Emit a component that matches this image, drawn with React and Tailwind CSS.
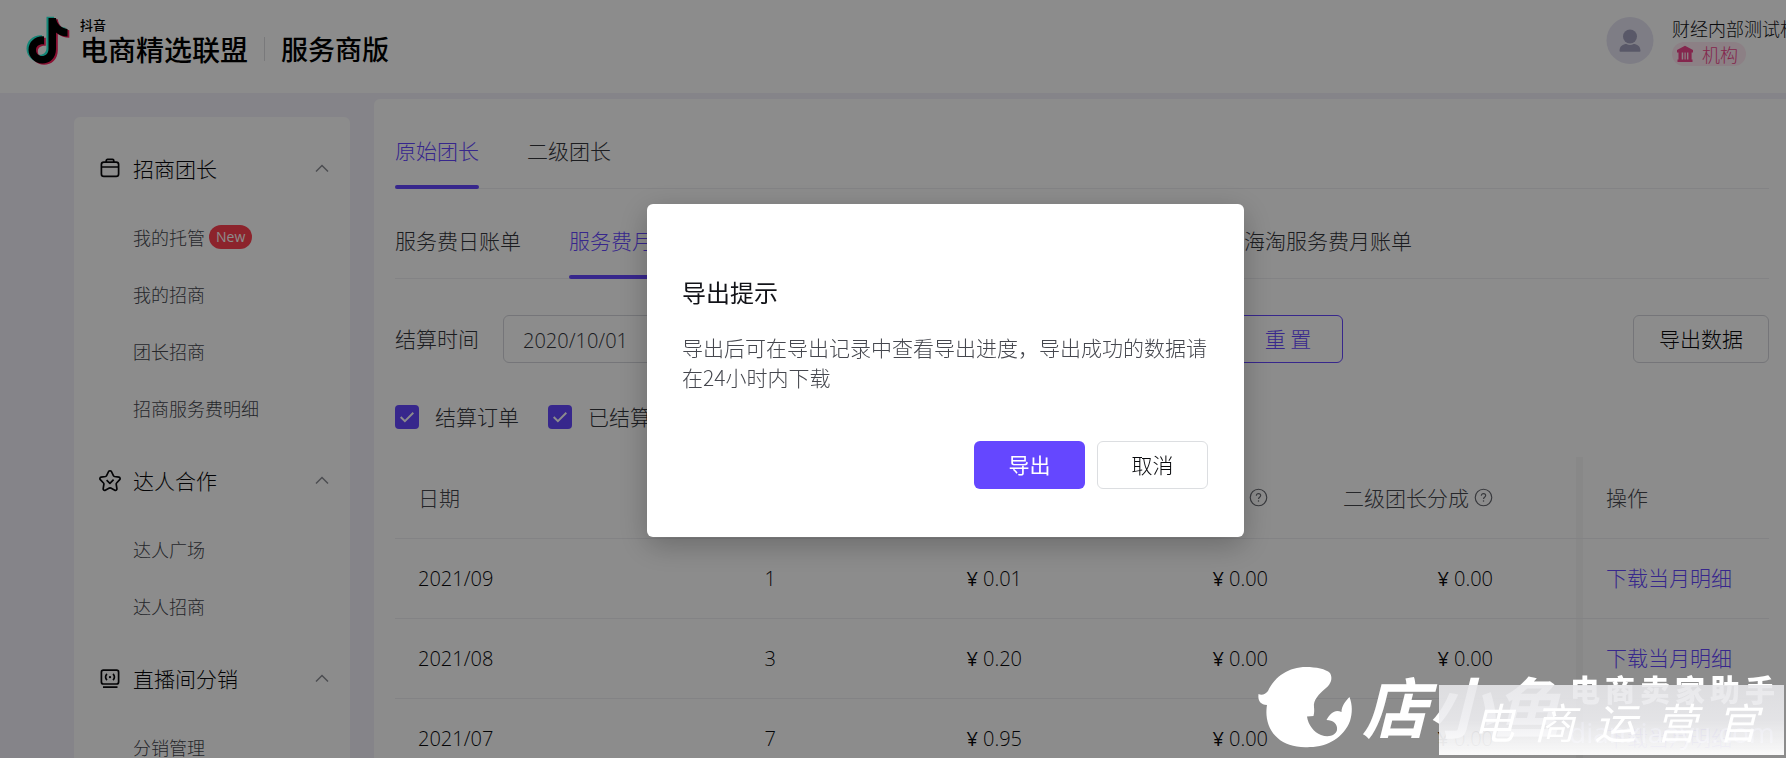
import React from 'react';

const CHECK = 'M3.5 9.5l4 4 8-8';

function ChevronUp() {
  return (
    <svg className="h-4 w-4 text-[#8b8d94]" viewBox="0 0 16 16" fill="none" stroke="currentColor" strokeWidth="1.5" aria-hidden="true">
      <path d="M2 10.5L8 4.5l6 6" />
    </svg>
  );
}

function BagIcon() {
  return (
    <svg className="h-6 w-6" viewBox="0 0 24 24" fill="none" stroke="currentColor" strokeWidth="1.7" aria-hidden="true">
      <rect x="3.4" y="5.2" width="17.2" height="14.2" rx="2.4" />
      <path d="M8.2 5.2V3.700c0-.8.6-1.300 1.300-1.300h5c.7 0 1.300.5 1.300 1.300v1.500M3.400 10h17.200" />
    </svg>
  );
}

function StarIcon() {
  return (
    <svg className="h-6 w-6" viewBox="0 0 24 24" fill="none" stroke="currentColor" strokeWidth="1.7" strokeLinejoin="round" aria-hidden="true">
      <path d="M10.6 2.500c.600-1 2.200-1 2.800 0l2 4.200c.200.400.600.700 1.100.800l4.400.700c1.200.200 1.700 1.600.800 2.500l-3.100 3.300c-.300.300-.500.800-.400 1.200l.700 4.500c.200 1.200-1 2.100-2.100 1.500l-4-2.100c-.500-.200-1-.200-1.500 0l-4 2.100c-1.100.600-2.300-.300-2.100-1.500l.700-4.500c.1-.4-.1-.9-.4-1.200L2.300 10.700c-.9-.9-.4-2.300.8-2.500l4.400-.7c.5-.1.900-.4 1.100-.8z" />
      <path d="M8.600 11.200l3.300 3.100 3.700-3.700" />
    </svg>
  );
}

function LiveIcon() {
  return (
    <svg className="h-6 w-6" viewBox="0 0 24 24" fill="none" stroke="currentColor" strokeWidth="1.7" aria-hidden="true">
      <rect x="3.400" y="3.200" width="17.200" height="13.800" rx="2" />
      <path d="M5 20.200h14.500M9 7c-1.900 1.600-1.900 4.600 0 6.200M15 7c1.900 1.600 1.900 4.600 0 6.200" />
      <circle cx="12" cy="10.100" r="1.200" fill="currentColor" stroke="none" />
    </svg>
  );
}

function NoteLogo() {
  const d = 'M22 1h7.500c.5 5.500 5 10.500 11.500 11v7.500c-4.500 0-8.500-1.500-11.500-4v16.500c0 9.500-6.500 14.500-13.700 14.500S2 40.500 2 33c0-8 6.500-14 15.500-13.500v8C12.500 27 9.500 29.500 9.500 33s2.500 6 6 6 6.500-2.500 6.500-7z';
  return (
    <svg className="h-12 w-11 overflow-visible" viewBox="0 0 44 48" aria-hidden="true">
      <path d={d} fill="#25f4d9" transform="translate(-1.500 -.2)" />
      <path d={d} fill="#fe1f5e" transform="translate(2.300 2.300)" />
      <path d={d} fill="#000" transform="translate(.500 .9)" />
    </svg>
  );
}

function HelpIcon() {
  return (
    <svg className="h-[19px] w-[19px] shrink-0" viewBox="0 0 20 20" fill="none" stroke="#66686f" strokeWidth="1.200" aria-hidden="true">
      <circle cx="10" cy="10" r="8.700" />
      <path d="M7.700 8.200c0-1.400 1-2.300 2.300-2.300s2.300.9 2.300 2.100c0 1.700-2.300 1.800-2.300 3.600" />
      <circle cx="10" cy="13.800" r=".8" fill="#66686f" stroke="none" />
    </svg>
  );
}

const menu = [
  { title: '招商团长', Icon: BagIcon, items: [['我的托管', 'New'], ['我的招商'], ['团长招商'], ['招商服务费明细']] },
  { title: '达人合作', Icon: StarIcon, items: [['达人广场'], ['达人招商']] },
  { title: '直播间分销', Icon: LiveIcon, items: [['分销管理']] },
];

const rows = [
  ['2021/09', '1', '0.01', '0.00', '0.00'],
  ['2021/08', '3', '0.20', '0.00', '0.00'],
  ['2021/07', '7', '0.95', '0.00', '0.00'],
];

function Header() {
  return (
    <header className="flex h-[93px] shrink-0 items-start justify-between bg-white pl-[26px]">
      <div className="flex items-start pt-4">
        <NoteLogo />
        <div className="ml-[10px] flex flex-col text-black">
          <span className="text-[13px] leading-[17px] font-medium">抖音</span>
          <div className="flex items-center">
            <span className="text-[28px] leading-8 font-medium">电商精选联盟</span>
            <span className="mx-4 h-6 w-px bg-[#dcdce0]" />
            <span className="text-[27px] leading-8 font-medium">服务商版</span>
          </div>
        </div>
      </div>
      <div className="flex w-[180px] items-start overflow-hidden pt-4">
        <svg className="h-12 w-12 shrink-0" viewBox="0 0 48 48" aria-hidden="true">
          <circle cx="24" cy="24.500" r="23.500" fill="#e6e4f3" />
          <circle cx="24" cy="20.500" r="7" fill="#a3a1bd" />
          <path d="M13.500 35c0-5 3.500-7 7-7 2 1.300 5 1.300 7 0 3.500 0 7 2 7 7 0 .6-.3.800-.8.800H14.300c-.5 0-.8-.2-.8-.8z" fill="#a3a1bd" />
        </svg>
        <div className="ml-[18px] flex flex-col items-start">
          <span className="text-lg leading-6 whitespace-nowrap text-[#121318]">财经内部测试机构</span>
          <span className="mt-0.5 flex h-6 items-center gap-2 rounded-full bg-[#ffe9f2] pr-2 pl-1 text-lg text-[#f0458c]">
            <svg className="h-[18px] w-[18px]" viewBox="0 0 18 18" fill="currentColor" aria-hidden="true">
              <path d="M9 .8L17 5v2.500H1V5zM2.500 7h3.200v8H2.500zM7.200 7h1.300v8H7.200zM9.700 7H11v8H9.700zM12.400 7h3.200v8h-3.200zM1.500 14.500h15V17h-15z" />
            </svg>
            机构
          </span>
        </div>
      </div>
    </header>
  );
}

function Sidebar() {
  return (
    <nav className="mt-6 w-[276px] shrink-0 rounded-t-md bg-white pt-3">
      {menu.map(({ title, Icon, items }) => (
        <section key={title} className="mb-[5px]">
          <button type="button" className="flex h-[79px] w-full items-center pr-5 pl-6 text-[21px] text-[#08090c]">
            <Icon />
            <span className="ml-[11px] flex-1 text-left">{title}</span>
            <ChevronUp />
          </button>
          <ul>
            {items.map(([label, badge]) => (
              <li key={label}>
                <a href="#menu" className="flex h-[57px] items-center pl-[59px] text-lg text-[#45474e]">
                  {label}
                  {badge && (
                    <span className="ml-1 flex h-6 items-center rounded-full bg-[#ff4050] px-[7px] font-['Open_Sans',sans-serif] text-sm font-normal text-white">
                      {badge}
                    </span>
                  )}
                </a>
              </li>
            ))}
          </ul>
        </section>
      ))}
    </nav>
  );
}

function Tabs({ tabs, active }) {
  return (
    <div role="tablist" className="flex h-[90px] gap-12 border-b border-[#eeeef2] pt-3.5 text-[21px] whitespace-nowrap">
      {tabs.map((t, i) => (
        <button
          key={t}
          type="button"
          role="tab"
          aria-selected={i === active}
          className={
            i === active
              ? 'relative text-[#6547ff] after:absolute after:inset-x-0 after:-bottom-px after:h-1 after:rounded-full after:bg-[#6547ff]'
              : 'text-[#33353b]'
          }
        >
          {t}
        </button>
      ))}
    </div>
  );
}

function Check({ children }) {
  return (
    <label className="flex items-center gap-4">
      <span className="relative flex h-6 w-6">
        <input type="checkbox" defaultChecked className="h-6 w-6 appearance-none rounded-[4px] checked:bg-[#6547ff]" />
        <svg className="pointer-events-none absolute inset-0.5 h-5 w-5" viewBox="0 0 19 19" fill="none" stroke="#fff" strokeWidth="1.800" aria-hidden="true">
          <path d={CHECK} />
        </svg>
      </span>
      {children}
    </label>
  );
}

function Money({ value }) {
  return (
    <span className="inline-flex items-center gap-[5px]">
      <span className="font-normal">¥</span>
      <span>{value}</span>
    </span>
  );
}

function Bills() {
  return (
    <table className="mt-6 w-full table-fixed text-[21px] text-[#08090c]">
      <colgroup>
        <col className="w-[160px]" />
        <col className="w-[244px]" />
        <col className="w-[247px]" />
        <col className="w-[246px]" />
        <col className="w-[225px]" />
        <col />
        <col className="w-[186px]" />
      </colgroup>
      <thead>
        <tr className="h-[82px] border-b border-[#eeeef2] text-[#45474e] *:font-light">
          <th scope="col" className="px-[23px] text-left">日期</th>
          <th scope="col" className="px-[23px] text-right">订单数</th>
          <th scope="col" className="px-[23px] text-right">服务费收入</th>
          {['技术服务费', '二级团长分成'].map((h) => (
            <th key={h} scope="col" className="px-6">
              <span className="flex items-center justify-end gap-[5px] whitespace-nowrap">{h}<HelpIcon /></span>
            </th>
          ))}
          <td />
          <th scope="col" className="px-[23px] text-left shadow-[-7px_0_0_rgba(0,0,0,0.03)]">操作</th>
        </tr>
      </thead>
      <tbody>
        {rows.map(([date, n, ...money]) => (
          <tr key={date} className="h-20 border-b border-[#eeeef2] font-['Open_Sans','Noto_Sans_CJK_SC',sans-serif] text-xl">
            <td className="px-[23px]">{date}</td>
            <td className="px-[23px] text-right">{n}</td>
            {money.map((m, i) => (
              <td key={i} className="px-6 text-right"><Money value={m} /></td>
            ))}
            <td />
            <td className="px-[23px] text-[21px] whitespace-nowrap shadow-[-7px_0_0_rgba(0,0,0,0.03)]">
              <a href="#detail" className="text-[#6547ff]">下载当月明细</a>
            </td>
          </tr>
        ))}
      </tbody>
    </table>
  );
}

function Modal() {
  return (
    <div className="fixed inset-0 flex items-start justify-center bg-black/45 pt-51 pl-[105px]">
      <div role="dialog" aria-labelledby="export-title" className="w-[597px] rounded-md bg-white pt-[70px] pr-9 pb-12 pl-[35px] shadow-[0_8px_30px_rgba(0,0,0,0.25)]">
        <h2 id="export-title" className="text-2xl leading-9 font-normal text-[#121318]">导出提示</h2>
        <p className="mt-[22px] text-[21px] leading-[30px] text-[#45474e]">
          导出后可在导出记录中查看导出进度，导出成功的数据请在24小时内下载
        </p>
        <div className="mt-[49px] flex justify-end gap-3 text-[21px]">
          <button type="button" className="h-12 w-[111px] rounded-md bg-[#6547ff] font-normal text-white">导出</button>
          <button type="button" className="h-12 w-[111px] rounded-md border border-[#dcdee1] bg-white text-[#08090c]">取消</button>
        </div>
      </div>
    </div>
  );
}

function Watermark() {
  return (
    <div className="pointer-events-none fixed right-0 bottom-0 h-[100px] w-[530px] text-white">
      <svg className="absolute top-[5px] left-0 h-[90px] w-[98px]" viewBox="0 0 98 90" aria-hidden="true">
        <path
          fill="#fff"
          d="M2.500 31c3 1.500 7 .5 9.500-3C19 13 33 4 50 4c10 0 20 2 24 6 3 5 1 11-4 15-7 6-13 12-12 19 .2 3 .5 5-.5 9l-6.500.5c1 8 7 16 14 18.500 8 3 15 0 16-5 1-6-4-10-10.500-10 4-7 8.500-11 15-8 0-6 4-11 8-15 3 8 3 16 .5 24-6 16-22 26-40 26C28 86 12 72 10.500 52c-.2-4 0-7 .5-10C5 42 1.500 38 2.500 31z"
        />
      </svg>
      <p className="absolute top-0 left-[106px] text-[66px] leading-[92px] font-bold whitespace-nowrap italic">店小鱼</p>
      <p className="absolute top-3 left-[314px] flex gap-[5px] text-[30px] leading-9 font-black">
        {['电', '商', '卖', '家', '助', '手'].map((c) => (
          <span key={c}>{c}</span>
        ))}
      </p>
      <p className="absolute top-[58px] left-[313px] font-['Open_Sans',sans-serif] text-[28px] leading-8 font-normal text-[#c4c4e4]">dianxiaoyu.com</p>
      <div className="absolute top-[27px] right-0.5 flex h-[70px] w-[345px] items-center justify-around bg-linear-to-b from-[#e6e6e9]/90 via-[#ededf0]/90 to-white/95 pr-4 pl-6 text-[42px] font-normal text-white italic">
        {['电', '商', '运', '营', '官'].map((c) => (
          <span key={c}>{c}</span>
        ))}
      </div>
    </div>
  );
}

export default function App() {
  return (
    <div className="flex h-screen flex-col overflow-hidden bg-[#f2f1f9] font-['Noto_Sans_CJK_SC',sans-serif] font-light">
      <Header />
      <div className="flex min-h-0 flex-1 items-stretch gap-6 pl-[74px]">
        <Sidebar />
        <main className="mt-1.5 min-w-0 flex-1 rounded-tl-md bg-white pr-[17px] pl-[21px]">
          <Tabs tabs={['原始团长', '二级团长']} active={0} />
          <Tabs
            tabs={['服务费日账单', '服务费月账单', '服务费明细', '导出记录', '海淘服务费日账单', '海淘服务费月账单']}
            active={1}
          />
          <div className="mt-9 flex items-center text-[21px] text-[#33353b]">
            <label htmlFor="from">结算时间</label>
            <div className="ml-6 flex h-12 w-[560px] items-center rounded-md border border-[#d5d6dc] px-[19px] pt-1 font-['Open_Sans',sans-serif] text-xl">
              <input id="from" defaultValue="2020/10/01" className="w-40 bg-transparent outline-none" />
            </div>
            <button type="button" className="ml-[170px] h-12 w-[110px] rounded-md border border-[#6547ff] text-[#6547ff]">重 置</button>
            <button type="button" className="ml-auto h-12 rounded-md border border-[#d5d6dc] px-[25px] text-[#08090c]">导出数据</button>
          </div>
          <div className="mt-[38px] flex items-center gap-[29px] text-[21px] text-[#33353b]">
            <Check>结算订单</Check>
            <Check>已结算订单</Check>
          </div>
          <Bills />
        </main>
      </div>
      <Modal />
      <Watermark />
    </div>
  );
}
